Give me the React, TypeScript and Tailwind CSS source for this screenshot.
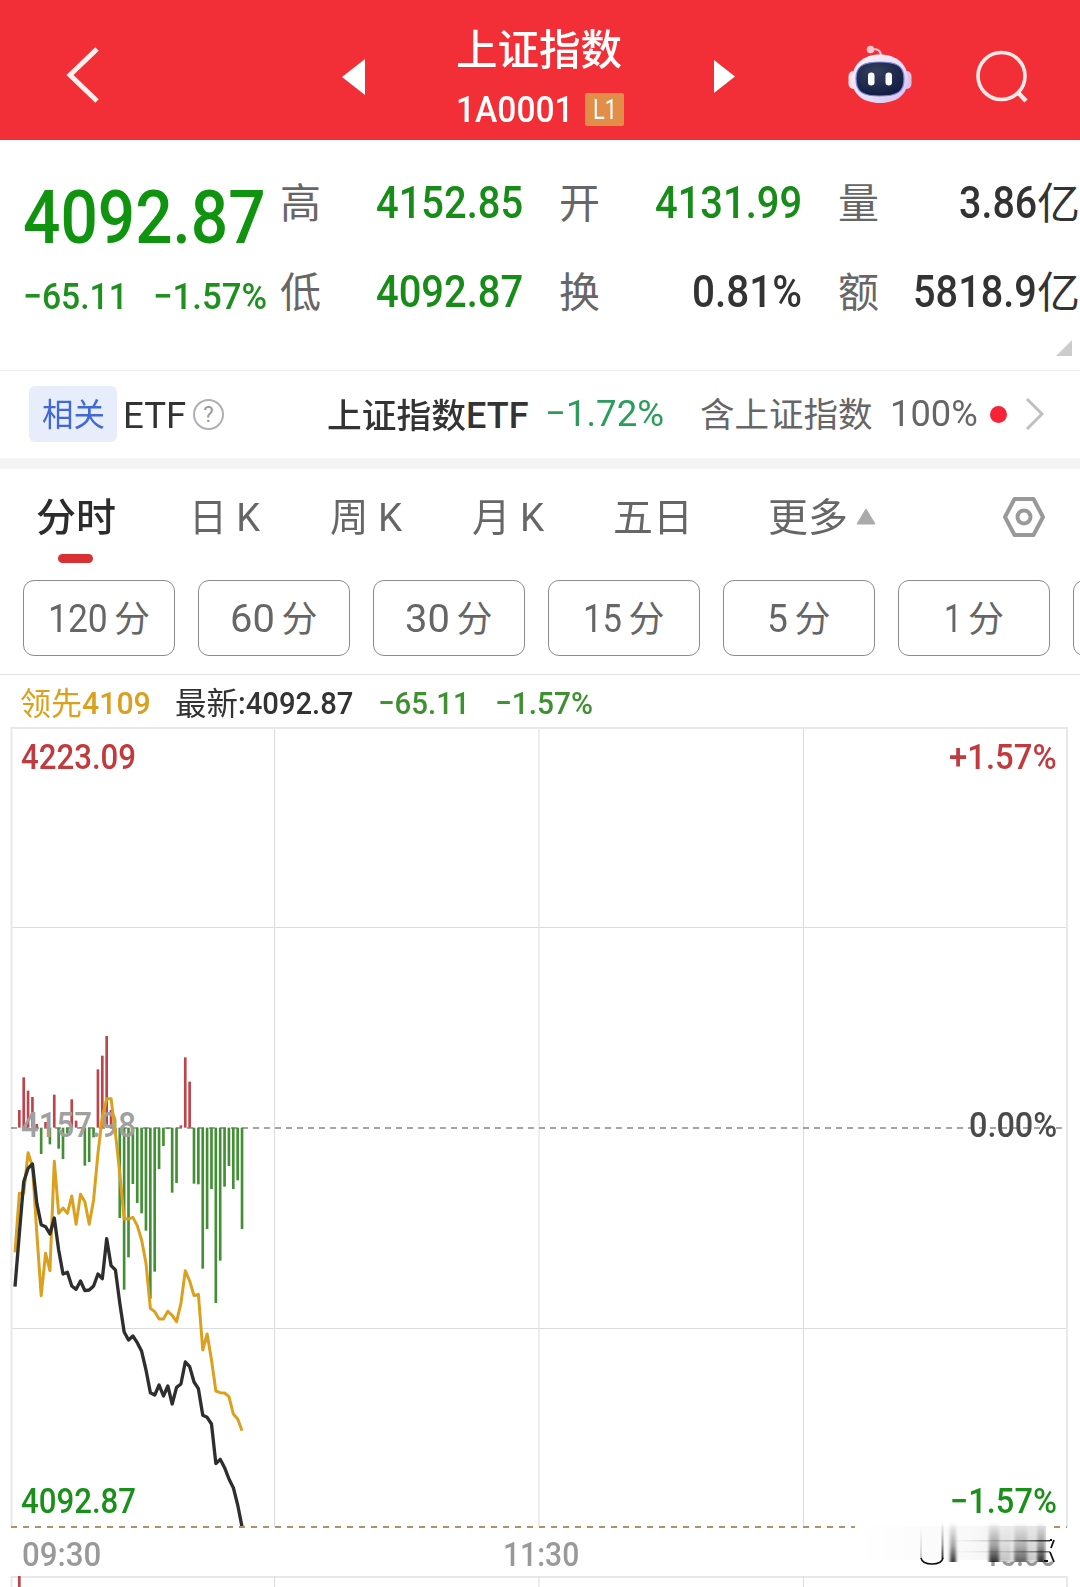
import { useLayoutEffect, useRef, useState, type ReactNode } from "react";

// 把文字横向压缩到容器宽度
function FitText({ className = "", children }: { className?: string; children: ReactNode }) {
  const box = useRef<HTMLSpanElement>(null);
  const inner = useRef<HTMLSpanElement>(null);
  const [scale, setScale] = useState(1);

  useLayoutEffect(() => {
    if (!box.current || !inner.current) return;
    setScale(box.current.clientWidth / inner.current.offsetWidth);
  }, [children]);

  return (
    <span ref={box} className={`block shrink-0 whitespace-nowrap ${className}`}>
      <span ref={inner} className="inline-block origin-left" style={{ transform: `scaleX(${scale})` }}>
        {children}
      </span>
    </span>
  );
}

const PERIODS = [
  { num: "120", width: "w-[60px]" },
  { num: "60", width: "w-[45px]" },
  { num: "30", width: "w-[45px]" },
  { num: "15", width: "w-[39px]" },
  { num: "5", width: "w-[21px]" },
  { num: "1", width: "w-[18px]" },
];

// 图形单位为 1/3 像素，每分钟 13.1 个单位
const STEP = 13.1;
const ZERO = 323;

const BARS = [
  270, 172, 212, 231, 312, 402, 306, 373, 224, 386, 417, 340, 238, 302, 321, 437, 426, 352, 148, 107, 48, 270, 345,
  594, 809, 712, 492, 549, 580, 632, 836, 755, 447, 378, 327, 518, 489, 316, 112, 185, 491, 493, 746, 627, 507, 849,
  722, 500, 438, 507, 481, 627,
];

const LEADING = [
  697, 520, 520, 398, 440, 640, 827, 700, 752, 424, 580, 564, 580, 528, 613, 523, 545, 613, 540, 400, 290, 236, 236,
  340, 460, 597, 597, 592, 617, 660, 730, 865, 875, 897, 897, 874, 886, 905, 850, 752, 783, 827, 823, 990, 942, 1020,
  1113, 1118, 1119, 1130, 1182, 1197, 1232,
];

const LATEST = [
  800, 640, 485, 445, 432, 550, 614, 620, 642, 594, 690, 762, 757, 798, 808, 783, 812, 810, 798, 762, 776, 656, 737,
  750, 850, 936, 960, 948, 968, 994, 1050, 1118, 1125, 1095, 1128, 1098, 1152, 1102, 1092, 1026, 1040, 1086, 1106,
  1186, 1192, 1212, 1331, 1318, 1343, 1377, 1403, 1455, 1521,
];

const toPoints = (values: number[]) => values.map((v, i) => `${45 + i * STEP},${v}`).join(" ");

function RobotIcon() {
  return (
    <svg width="64" height="60" viewBox="0 0 64 60">
      <defs>
        <linearGradient id="shell" x1="0" y1="0" x2="1" y2="1">
          <stop offset="0" stopColor="#fff4f8" />
          <stop offset="0.6" stopColor="#e6dcf8" />
          <stop offset="1" stopColor="#d3bdf0" />
        </linearGradient>
        <radialGradient id="visor" cx="0.4" cy="0.3" r="0.7">
          <stop offset="0" stopColor="#35405f" />
          <stop offset="1" stopColor="#131d42" />
        </radialGradient>
      </defs>
      <path d="M23 5C29 3 33 5 33 12" fill="none" stroke="#fbc9cf" strokeWidth="2.2" />
      <circle cx="22.500" cy="4.500" r="3.8" fill="#fbc6cd" />
      <rect x="0.500" y="26" width="10" height="18" rx="5" fill="#f8dfe8" />
      <rect x="53.500" y="26" width="10" height="18" rx="5" fill="#dfc0ea" />
      <path
        d="M32 9.500C49 9.500 60 20 60 34.500C60 49 49 58 32 58C15 58 4 49 4 34.500C4 20 15 9.500 32 9.500Z"
        fill="url(#shell)"
      />
      <path
        d="M32 17C49 17 56 21 56 34C56 47 49 51 32 51C15 51 8 47 8 34C8 21 15 17 32 17Z"
        fill="url(#visor)"
        stroke="#7d86dc"
        strokeWidth="1.2"
      />
      <rect x="20" y="27.500" width="6.500" height="13" rx="3.200" fill="#fff" />
      <rect x="37.500" y="27.500" width="6.500" height="13" rx="3.200" fill="#fff" />
    </svg>
  );
}

function Header() {
  return (
    <header className="flex h-[140px] items-start bg-[#f22f36] font-medium text-white">
      <svg className="mt-[45px] ml-[64px]" width="38" height="60" viewBox="0 0 38 60">
        <path d="M33 4L6 30L33 56" fill="none" stroke="#fff0ee" strokeWidth="5" />
      </svg>
      <svg className="mt-[59px] ml-[240px]" width="23" height="36" viewBox="0 0 23 36">
        <path d="M23 0V36L0 18Z" fill="#fff" />
      </svg>
      <div className="mt-[24px] ml-[91px] w-[168px]">
        <FitText className="h-[54px] w-[166px] text-[42px] leading-[54px]">上证指数</FitText>
        <div className="mt-[14px] flex h-[34px] items-center">
          <FitText className="w-[118px] pt-px text-[37px] leading-[34px]">1A0001</FitText>
          <div className="ml-[11px] flex h-[33px] w-[40px] items-center justify-center rounded-[2px] bg-[#e08e48]">
            <FitText className="w-[24px] text-[28px] leading-[33px] font-normal">L1</FitText>
          </div>
        </div>
      </div>
      <svg className="mt-[60px] ml-[90px]" width="21" height="33" viewBox="0 0 21 33">
        <path d="M0 0L21 16.500L0 33Z" fill="#fff" />
      </svg>
      <div className="mt-[45px] ml-[113px]">
        <RobotIcon />
      </div>
      <svg className="mt-[49px] ml-[63px]" width="56" height="56" viewBox="0 0 56 56">
        <circle cx="26.500" cy="27" r="23.500" fill="none" stroke="#ffe9e6" strokeWidth="3.6" />
        <path d="M43 43.500L51 52" stroke="#ffe9e6" strokeWidth="4.500" />
      </svg>
    </header>
  );
}

function Quote() {
  const label = "text-[41px] leading-[50px] font-normal text-[#666]";
  return (
    <section className="relative flex h-[230px] text-[44.500px] font-medium text-[#333]">
      <div className="w-[280px] pt-[33px] pl-[23px] text-[#109410]">
        <FitText className="w-[243px] text-[75px] leading-[89px] font-[550]">4092.87</FitText>
        <div className="flex h-[69px] items-center justify-between pr-[13px] text-[37.500px] text-[#1e901e]">
          <FitText className="w-[105px]">−65.11</FitText>
          <FitText className="w-[114px]">−1.57%</FitText>
        </div>
      </div>
      <div className="grid h-[198px] grid-cols-[243px_243px_242px] grid-rows-[89px_89px] gap-x-9 pt-[19px] *:flex *:items-center *:justify-between">
        <div>
          <span className={label}>高</span>
          <FitText className="w-[147px] text-[#188c18]">4152.85</FitText>
        </div>
        <div>
          <span className={label}>开</span>
          <FitText className="w-[147px] text-[#188c18]">4131.99</FitText>
        </div>
        <div>
          <span className={label}>量</span>
          <div className="flex items-center">
            <FitText className="w-[78px]">3.86</FitText>
            <span className="text-[43px] leading-[50px] font-normal">亿</span>
          </div>
        </div>
        <div>
          <span className={label}>低</span>
          <FitText className="w-[147px] text-[#188c18]">4092.87</FitText>
        </div>
        <div>
          <span className={label}>换</span>
          <FitText className="w-[110px]">0.81%</FitText>
        </div>
        <div>
          <span className={label}>额</span>
          <div className="flex items-center">
            <FitText className="w-[124px]">5818.9</FitText>
            <span className="text-[43px] leading-[50px] font-normal">亿</span>
          </div>
        </div>
      </div>
      <svg className="absolute right-[8px] bottom-[14px]" width="16" height="16" viewBox="0 0 16 16">
        <path d="M16 0V16H0Z" fill="#ccc" />
      </svg>
    </section>
  );
}

function RelatedEtf() {
  return (
    <section className="flex h-[88px] items-center border-t border-[#ececec] pb-[2px] pl-[29px] text-[34.500px] text-[#333]">
      <div className="flex h-[56px] w-[88px] items-center justify-center rounded-[6px] bg-[#e8edfb]">
        <FitText className="w-[63px] pt-[2px] text-[32px] text-[#4068d8]">相关</FitText>
      </div>
      <FitText className="ml-[6px] w-[63px] pt-[5px] text-[36px]">ETF</FitText>
      <div className="mt-[2px] ml-[7px] flex size-[31px] items-center justify-center rounded-full border-2 border-[#b0b0b0] text-[22px] leading-none text-[#999]">
        ?
      </div>
      <FitText className="ml-[103px] w-[139px] pt-[6px] font-[450]">上证指数</FitText>
      <FitText className="w-[62px] pt-[5px] text-[36px] font-medium">ETF</FitText>
      <FitText className="ml-[17px] w-[119px] text-[37.500px] text-[#2a9d5c]">−1.72%</FitText>
      <FitText className="ml-[36px] w-[173px] pt-[5px] text-[#666]">含上证指数</FitText>
      <FitText className="ml-[17px] w-[88px] text-[37.500px] text-[#666]">100%</FitText>
      <div className="mt-[2px] ml-[12px] size-[17px] rounded-full bg-[#f92338]" />
      <svg className="ml-[18px]" width="20" height="34" viewBox="0 0 20 34">
        <path d="M2 2L17 17L2 32" fill="none" stroke="#c0c0c0" strokeWidth="3" />
      </svg>
    </section>
  );
}

function Tabs() {
  return (
    <nav className="flex h-[94px] items-center pl-[36px] text-[39px] text-[#666]">
      <div className="relative flex h-full items-center text-[#2c2c2c]">
        <FitText className="w-[80px] pt-[4px] font-[450]">分时</FitText>
        <div className="absolute bottom-0 left-[22px] h-[9px] w-[35px] rounded-full bg-[#d93033]" />
      </div>
      <FitText className="ml-[73px] w-[71px] pt-[4px]">日 K</FitText>
      <FitText className="ml-[70px] w-[72px] pt-[4px]">周 K</FitText>
      <FitText className="ml-[70px] w-[72px] pt-[4px]">月 K</FitText>
      <FitText className="ml-[69px] w-[80px] pt-[4px]">五日</FitText>
      <FitText className="ml-[75px] w-[80px] pt-[4px]">更多</FitText>
      <svg className="ml-[8px]" width="20" height="17" viewBox="0 0 20 17">
        <path d="M10 1L19 16H1Z" fill="#aaa" stroke="#aaa" strokeLinejoin="round" />
      </svg>
      <svg className="mt-[2px] ml-[126px]" width="44" height="42" viewBox="0 0 44 42">
        <path d="M12.500 3H31.500L41 21L31.500 39H12.500L3 21Z" fill="none" stroke="#999" strokeWidth="4" strokeLinejoin="round" />
        <circle cx="22" cy="21" r="6.500" fill="none" stroke="#999" strokeWidth="4" />
      </svg>
    </nav>
  );
}

function Periods() {
  return (
    <div className="flex gap-[23px] overflow-hidden border-b border-[#e2e2e2] pt-[17px] pb-[18px] pl-[23px] text-[#666]">
      {PERIODS.map((p) => (
        <div
          key={p.num}
          className="flex h-[76px] w-[152px] shrink-0 items-center justify-center gap-[6px] rounded-[11px] border border-[#8c8c8c]"
        >
          <FitText className={`${p.width} pt-[2px] text-[39px] font-normal`}>{p.num}</FitText>
          <span className="pt-[4px] text-[36px]">分</span>
        </div>
      ))}
      <div className="h-[76px] w-[152px] shrink-0 rounded-[11px] border border-[#8c8c8c]" />
    </div>
  );
}

function ChartSummary() {
  return (
    <div className="flex h-[52px] items-center pt-[3px] pl-[20px] text-[32px] font-medium text-[#333]">
      <FitText className="w-[62px] pt-[2px] font-normal text-[#dba01e]">领先</FitText>
      <FitText className="w-[69px] text-[#dba01e]">4109</FitText>
      <FitText className="ml-[24px] w-[63px] pt-[2px] font-normal">最新</FitText>
      <FitText className="w-[115px]">:4092.87</FitText>
      <FitText className="ml-[25px] w-[92px] text-[#3f9130]">−65.11</FitText>
      <FitText className="ml-[25px] w-[98px] text-[#3f9130]">−1.57%</FitText>
    </div>
  );
}

function Chart() {
  return (
    <div className="relative h-[800px] text-[35px] leading-[40px] font-medium">
      <svg className="block" width="1080" height="801" viewBox="0 0 1080 801">
        <g stroke="#dcdcdc" strokeWidth="1">
          <path d="M274.500 0V800M539 0V800M803.500 0V800M11 200.500H1067M11 601.500H1067" />
        </g>
        <path d="M11.500 800V1H1067V800" fill="none" stroke="#e8e8e8" strokeWidth="2" />
        <path d="M11 401H1067" stroke="#888" strokeWidth="1.500" strokeDasharray="6 5" />
        <g transform="translate(0 293) scale(0.33333)">
          {BARS.map((y, i) => (
            <path
              key={i}
              d={`M${58 + i * STEP} ${ZERO}V${y}`}
              stroke={y < ZERO ? "#bf4449" : "#438f35"}
              strokeWidth="8"
            />
          ))}
        </g>
        <text x="21" y="410" textLength="115" lengthAdjust="spacingAndGlyphs" fill="#a0a0a0">
          4157.98
        </text>
        <g transform="translate(0 293) scale(0.33333)" fill="none" strokeLinejoin="round">
          <polyline points={toPoints(LEADING)} stroke="#dba01e" strokeWidth="9" />
          <polyline points={toPoints(LATEST)} stroke="#2e2e2e" strokeWidth="10" />
        </g>
        <path d="M11 800H855M1054 800H1067" stroke="#b3906a" strokeWidth="2" strokeDasharray="6 6" />
      </svg>
      <span className="absolute top-[11px] left-[21px] text-[#c03a3e]">
        <FitText className="w-[115px]">4223.09</FitText>
      </span>
      <span className="absolute top-[11px] right-[23px] text-[#c03a3e]">
        <FitText className="w-[108px]">+1.57%</FitText>
      </span>
      <span className="absolute top-[379px] right-[23px] text-[#4a4a4a]">
        <FitText className="w-[88px]">0.00%</FitText>
      </span>
      <span className="absolute top-[755px] left-[21px] text-[#1a8f1a]">
        <FitText className="w-[115px]">4092.87</FitText>
      </span>
      <span className="absolute top-[755px] right-[23px] text-[#1a8f1a]">
        <FitText className="w-[107px]">−1.57%</FitText>
      </span>
    </div>
  );
}

// 右下角收盘时间上的涂抹痕迹
function Smudge() {
  return (
    <svg className="absolute right-[10px] bottom-0" width="220" height="64" viewBox="850 1512 220 64">
      <defs>
        <linearGradient id="fadeUp" x1="0" y1="0" x2="0" y2="1">
          <stop offset="0" stopColor="#000" stopOpacity="0" />
          <stop offset="0.6" stopColor="#000" stopOpacity="0.35" />
          <stop offset="1" stopColor="#000" stopOpacity="0.8" />
        </linearGradient>
        <linearGradient id="fadeLeft" x1="0" y1="0" x2="1" y2="0">
          <stop offset="0" stopColor="#000" stopOpacity="0" />
          <stop offset="0.6" stopColor="#000" stopOpacity="0.2" />
          <stop offset="1" stopColor="#000" stopOpacity="0.8" />
        </linearGradient>
        <filter id="soft" x="-50%" y="-10%" width="200%" height="120%">
          <feGaussianBlur stdDeviation="1.6 0.4" />
        </filter>
      </defs>
      <rect x="856" y="1529" width="202" height="32.500" fill="#fff" />
      <rect x="856" y="1526" width="190" height="34" fill="url(#fadeLeft)" opacity="0.12" />
      <g fill="url(#fadeUp)" filter="url(#soft)">
        <rect x="950" y="1522" width="6" height="40" />
        <rect x="989" y="1522" width="10" height="40" />
        <rect x="999" y="1522" width="12" height="40" opacity="0.25" />
        <rect x="1014" y="1522" width="13" height="40" opacity="0.75" />
        <rect x="1027" y="1522" width="8" height="40" opacity="0.2" />
        <rect x="1037" y="1522" width="8" height="40" />
      </g>
      <rect x="920.500" y="1526" width="1" height="33" fill="url(#fadeUp)" opacity="0.5" />
      <rect x="941.500" y="1522" width="2" height="37" fill="url(#fadeUp)" />
      <path d="M921 1558C922 1563 926 1564 932 1564C938 1564 942 1563 943 1558" fill="none" stroke="#111" strokeWidth="1.500" />
      <rect x="950" y="1540" width="100" height="1.500" fill="url(#fadeLeft)" />
      <rect x="950" y="1551" width="100" height="1.500" fill="url(#fadeLeft)" opacity="0.7" />
      <path d="M1054 1540L1051 1548M1050 1540H1052M1050 1552L1054 1562M1044 1561H1048" fill="none" stroke="#111" strokeWidth="1.800" />
    </svg>
  );
}

function TimeAxis() {
  return (
    <div className="relative flex h-[49px] items-center pt-[4px] pl-[22px] text-[34px] leading-[40px] font-medium text-[#999]">
      <FitText className="w-[79px]">09:30</FitText>
      <FitText className="ml-[402px] w-[76px]">11:30</FitText>
      <FitText className="mr-[24px] ml-auto w-[72px]">15:00</FitText>
      <Smudge />
    </div>
  );
}

export default function App() {
  return (
    <div className="h-[1587px] w-[1080px] overflow-hidden bg-white font-[Roboto,'Noto_Sans_CJK_SC',sans-serif]">
      <Header />
      <Quote />
      <RelatedEtf />
      <div className="h-[11px] bg-[#f4f4f4]" />
      <Tabs />
      <Periods />
      <ChartSummary />
      <Chart />
      <TimeAxis />
      <svg className="block" width="1080" height="11" viewBox="0 0 1080 11">
        <path d="M11.500 11V1H1067V11" fill="none" stroke="#e8e8e8" strokeWidth="2" />
        <path d="M274.500 0V11M539 0V11M803.500 0V11" stroke="#dcdcdc" />
        <path d="M19.300 0V11" stroke="#bf4449" strokeWidth="2.700" />
      </svg>
    </div>
  );
}
